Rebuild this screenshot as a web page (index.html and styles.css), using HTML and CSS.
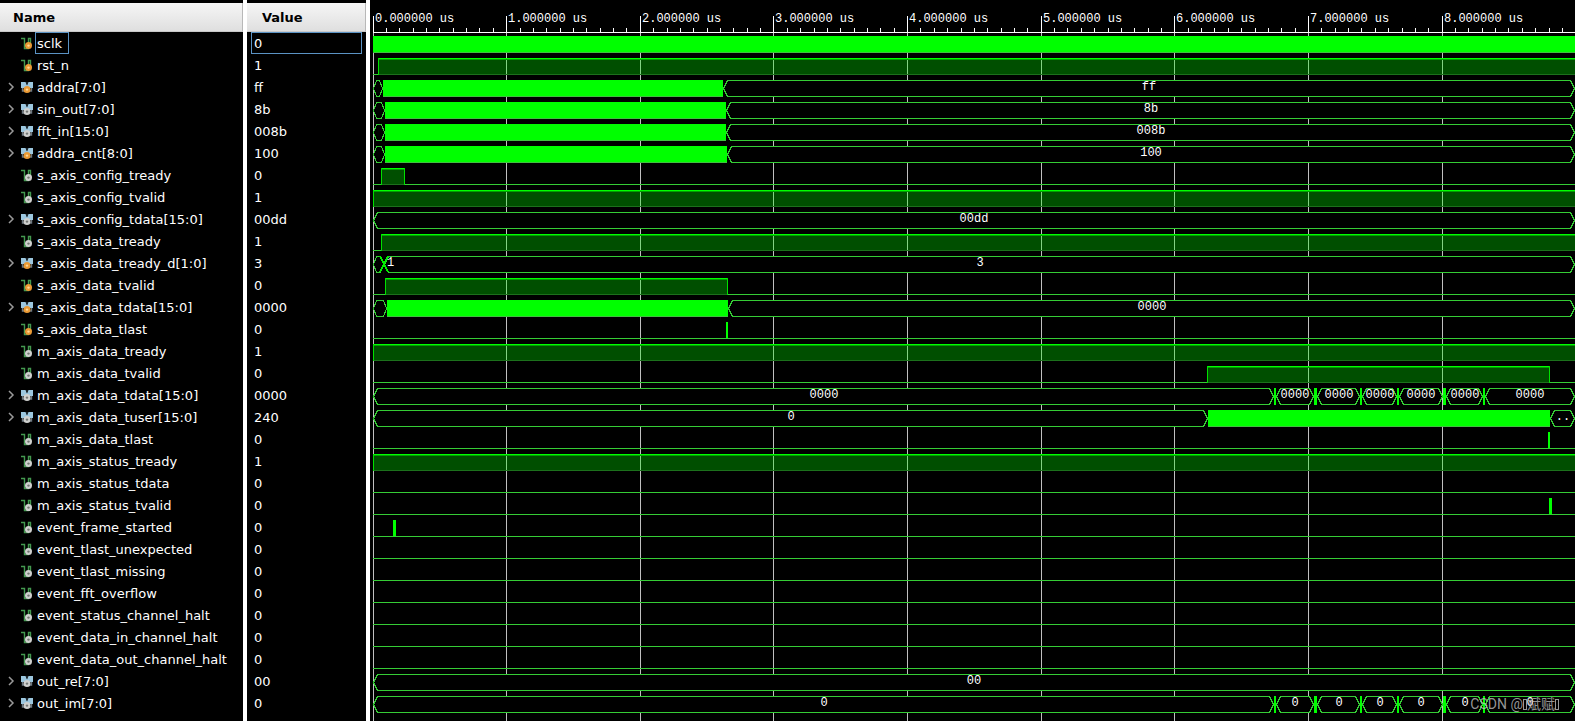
FILE: index.html
```html
<!DOCTYPE html>
<html lang="en">
<head>
<meta charset="utf-8">
<title>Waveform viewer</title>
<link rel="stylesheet" href="styles.css">
</head>
<body>
<svg class="defs" aria-hidden="true">
  <symbol id="scalar" viewBox="0 0 13 13">
    <path d="M0 1.5H3.5V11.5H7.5V1.5H9.5V8" fill="none" stroke="#43994f" stroke-width="1.4"/>
  </symbol>
  <symbol id="bus" viewBox="0 0 13 13">
    <path d="M1.5 6V10H10.5V6" fill="none" stroke="#6d7881" stroke-width="1.4"/>
    <path d="M0 1H4.6L6 4L7.4 1H12V7H0Z" fill="#9cc7df"/>
    <path d="M4.6 1H7.4L6 4.6Z" fill="#1c262c"/>
  </symbol>
</svg>
<main class="viewer">
  <table class="signals">
    <thead>
      <tr>
        <th class="name"><div class="head">Name</div></th>
        <th class="value"><div class="head">Value</div></th>
        <th class="wave"><svg class="ruler" id="ruler"></svg></th>
      </tr>
    </thead>
    <tbody id="rows"></tbody>
  </table>
  <div class="watermark"><span>CSDN @</span><i></i><span>斌赋</span><i></i></div>
</main>
<script src="wave.js"></script>
</body>
</html>
```
FILE: styles.css
```css
* { box-sizing: border-box; }
body {
  margin: 0;
  background: #000;
  color: #fff;
  font: 13px "DejaVu Sans", "Noto Sans CJK SC", sans-serif;
}
.defs { position: absolute; width: 0; height: 0; }
.viewer { position: relative; overflow: hidden; }
.signals {
  width: 100%;
  height: 100vh;
  table-layout: fixed;
  border-collapse: separate;
  border-spacing: 0;
}
th, td { padding: 0; text-align: left; vertical-align: top; }
th.name { width: 247px; }
th.value { width: 123px; }
.name, .value { border-right: 4px solid #fff; }
thead tr { height: 32px; }
tbody tr { height: 22px; }
tbody tr.rest { height: auto; }
.head {
  height: 29px;
  margin-top: 3px;
  padding-left: 13px;
  line-height: 29px;
  color: #000;
  background: linear-gradient(#f6f6f6, #dfdfdf);
  border-right: 1px solid #b8b8b8;
  border-bottom: 1px solid #c8c8c8;
}
.value .head { padding-left: 15px; }
.entry {
  display: flex;
  align-items: center;
  height: 22px;
  padding-left: 5px;
  white-space: nowrap;
}
.expand {
  width: 12px;
  height: 16px;
  margin-right: 4px;
  padding: 0;
  border: 0;
  background: none;
}
.expand svg { display: block; width: 12px; height: 16px; }
.expand.none { visibility: hidden; }
.icon { width: 13px; height: 13px; margin-right: 1px; }
.label, .reading {
  height: 22px;
  line-height: 22px;
  border: 1px solid transparent;
}
.label { padding: 0 6px 0 1px; }
.reading { margin: 0 4px; padding-left: 2px; }
.focus { border-color: #5b93c4; }
.wave svg { display: block; width: 100%; height: 22px; overflow: hidden; }
.wave .ruler { height: 32px; }
.rest .wave svg { height: 7px; }
.wave text {
  font: 12px "Liberation Mono", monospace;
  fill: #fff;
}
.wave .mid { text-anchor: middle; }
.watermark {
  position: absolute;
  right: 16px;
  bottom: 7px;
  display: flex;
  align-items: center;
  font: 14px/20px Roboto, "Noto Sans CJK SC", sans-serif;
  color: rgba(190, 190, 190, 0.8);
}
.watermark i {
  width: 4px;
  height: 11px;
  border: 1px solid rgba(190, 190, 190, 0.8);
}
```
FILE: wave.js
```js
// Times are in nanoseconds. A wave is a list of shapes:
//   low, high: [start, end]   bus: [start, end, text]   busy: [start, end]
//   cross, pulse: [start, width in px]
const END = 8994;
const LOW = [['low', 0, END]];
const HIGH = [['high', 0, END]];
const beats = text => [
  ['bus', 0, 6743, text],
  ['bus', 6758, 7043, text],
  ['bus', 7065, 7387, text],
  ['bus', 7402, 7664, text],
  ['bus', 7679, 8008, text],
  ['bus', 8030, 8307, text],
  ['bus', 8322, END, text],
  ['pulse', 6743, 2, 1], ['pulse', 7043, 3, 1], ['pulse', 7387, 2, 1],
  ['pulse', 7664, 2, 1], ['pulse', 8008, 3, 1], ['pulse', 8307, 2, 1]
];
const burst = (a, b, text) => [['bus', 0, a, ''], ['busy', a, b], ['bus', b, END, text]];

const signals = [
  ['sclk', '0', 'reg', [['busy', 0, END]]],
  ['rst_n', '1', 'reg', [['low', 0, 40], ['high', 40, END]]],
  ['addra[7:0]', 'ff', 'reg', burst(78, 2622, 'ff')],
  ['sin_out[7:0]', '8b', 'net', burst(93, 2645, '8b')],
  ['fft_in[15:0]', '008b', 'net', burst(93, 2645, '008b')],
  ['addra_cnt[8:0]', '100', 'reg', burst(93, 2652, '100')],
  ['s_axis_config_tready', '0', 'net', [['low', 0, 62], ['high', 62, 241], ['low', 241, END]]],
  ['s_axis_config_tvalid', '1', 'net', HIGH],
  ['s_axis_config_tdata[15:0]', '00dd', 'net', [['bus', 0, END, '00dd']]],
  ['s_axis_data_tready', '1', 'net', [['low', 0, 62], ['high', 62, END]]],
  ['s_axis_data_tready_d[1:0]', '3', 'reg', [['bus', 0, 84, ''], ['bus', 84, END, '3'], ['cross', 55, 8, '1']]],
  ['s_axis_data_tvalid', '0', 'reg', [['low', 0, 92], ['high', 92, 2660], ['low', 2660, END]]],
  ['s_axis_data_tdata[15:0]', '0000', 'reg', burst(108, 2661, '0000')],
  ['s_axis_data_tlast', '0', 'reg', [...LOW, ['pulse', 2644, 2]]],
  ['m_axis_data_tready', '1', 'net', HIGH],
  ['m_axis_data_tvalid', '0', 'net', [['low', 0, 6242], ['high', 6242, 8808], ['low', 8808, END]]],
  ['m_axis_data_tdata[15:0]', '0000', 'net', beats('0000')],
  ['m_axis_data_tuser[15:0]', '240', 'net', [['bus', 0, 6254, '0'], ['busy', 6254, 8809], ['bus', 8809, END, '..']]],
  ['m_axis_data_tlast', '0', 'net', [...LOW, ['pulse', 8794, 2]]],
  ['m_axis_status_tready', '1', 'net', HIGH],
  ['m_axis_status_tdata', '0', 'net', LOW],
  ['m_axis_status_tvalid', '0', 'net', [...LOW, ['pulse', 8802, 3]]],
  ['event_frame_started', '0', 'net', [...LOW, ['pulse', 152, 3]]],
  ['event_tlast_unexpected', '0', 'net', LOW],
  ['event_tlast_missing', '0', 'net', LOW],
  ['event_fft_overflow', '0', 'net', LOW],
  ['event_status_channel_halt', '0', 'net', LOW],
  ['event_data_in_channel_halt', '0', 'net', LOW],
  ['event_data_out_channel_halt', '0', 'net', LOW],
  ['out_re[7:0]', '00', 'net', [['bus', 0, END, '00']]],
  ['out_im[7:0]', '0', 'net', beats('0')]
];

const body = document.getElementById('rows');
const ruler = document.getElementById('ruler');
const rect = (x, y, w, h, fill) => `<rect x="${x}" y="${y}" width="${typeof w === 'number' ? Math.max(w, 0) : w}" height="${h}" fill="${fill}"/>`;

signals.forEach(([name, value, kind], i) => {
  const bus = name.includes('[');
  const cx = bus ? 6 : 7.5;
  const [rim, core] = kind === 'reg' ? ['#ea9a35', '#ffd796'] : ['#cfd0ce', '#747674'];
  const focus = i === 0 ? ' focus' : '';
  body.insertAdjacentHTML('beforeend', `<tr>
    <td class="name"><div class="entry">
      <button class="expand${bus ? '' : ' none'}" aria-label="Expand ${name}"><svg viewBox="0 0 12 16"><path d="M4 4L8 8L4 12" fill="none" stroke="#9a9a9a" stroke-width="1.5"/></svg></button>
      <svg class="icon" viewBox="0 0 13 13"><use href="#${bus ? 'bus' : 'scalar'}"/><circle cx="${cx}" cy="8.6" r="3.5" fill="${rim}"/><circle cx="${cx}" cy="8.6" r="1.2" fill="${core}"/></svg>
      <span class="label${focus}">${name}</span></div></td>
    <td class="value"><div class="reading${focus}">${value}</div></td>
    <td class="wave"><svg></svg></td></tr>`);
});
body.insertAdjacentHTML('beforeend', '<tr class="rest"><td class="name"></td><td class="value"></td><td class="wave"><svg></svg></td></tr>');

function draw() {
  const width = ruler.getBoundingClientRect().width;
  const px = t => 3 + Math.floor(t / END * (width - 3));
  let grid = '';
  for (let s = 0; s < 9; s++) grid += rect(px(s * 1000), 0, 1, '100%', '#c0c0c0');

  let marks = '';
  for (let t = 0; t < END; t += 100) {
    const major = t % 1000 === 0;
    marks += rect(px(t), major ? 16 : 28, 1, major ? 16 : 4, '#fff');
    if (major) marks += `<text x="${px(t) + 2}" y="22">${t / 1000}.000000 us</text>`;
  }
  ruler.setAttribute('shape-rendering', 'crispEdges');
  ruler.innerHTML = marks;

  const shape = ([type, a, b, text]) => {
    const x = px(a), e = px(b), w = e - x;
    if (type === 'low') return rect(x, 20, w, 1, '#35cc35');
    if (type === 'busy') return rect(x, 4, w, 16, '#00ff00') + rect(x, 20, w, 1, '#40c040');
    if (type === 'high') {
      return rect(x, 4, w, 17, 'rgba(0,255,0,.31)') + rect(x, 4, w, 1, '#00ff00') +
        rect(x, 5, w, 1, '#00a000') + rect(x, 20, w, 1, '#1c701c') +
        rect(x, 4, 1, 17, '#00e000') + (b < END ? rect(e - 1, 4, 1, 17, '#00e000') : '');
    }
    if (type === 'pulse') return rect(x, 4, b, text ? 17 : 16, '#00ff00');
    if (type === 'cross') {
      return `<path d="M${x} 4L${x + b} 20M${x + b} 4L${x} 20" stroke="#00f000" stroke-width="2"/>` +
        `<text x="${x + b - 1}" y="14">${text}</text>`;
    }
    const l = x + 0.5, r = e - 0.5, m = w < 16 ? 3 : 4;
    return `<path d="M${l} 12.5L${l + m} 4.5H${r - m}L${r} 12.5L${r - m} 20.5H${l + m}Z" fill="#000" stroke="#35cc35"/>` +
      `<text class="mid" x="${Math.round((x + e) / 2)}" y="14">${text}</text>`;
  };

  // The ruler's base line lies on the top edge of the first row.
  body.querySelectorAll('.wave svg').forEach((svg, i) => {
    svg.setAttribute('shape-rendering', 'crispEdges');
    svg.innerHTML = grid + (i === 0 ? rect(3, 0, '100%', 1, '#fff') : '') +
      (signals[i] ? signals[i][3].map(shape).join('') : '');
  });
}
draw();
addEventListener('resize', draw);
```
